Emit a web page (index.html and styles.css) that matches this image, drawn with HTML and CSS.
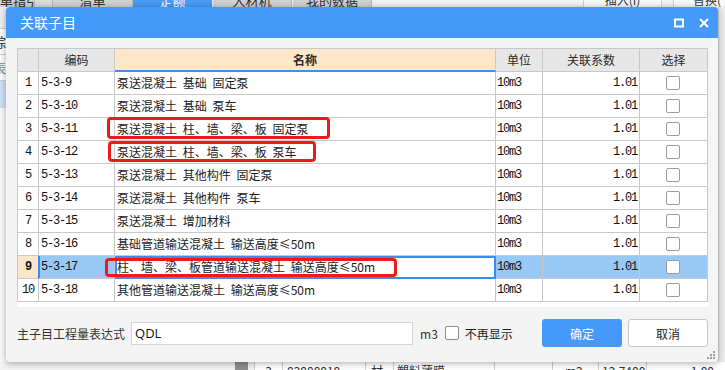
FILE: index.html
```html
<!DOCTYPE html>
<html lang="zh">
<head>
<meta charset="utf-8">
<title>关联子目</title>
<link rel="stylesheet" href="styles.css">
</head>
<body>
<div class="app">
  <div class="tabbar">
    <div class="tab t1"><span>单指引</span></div>
    <div class="tab-gap"></div>
    <div class="tab t2"><span>清单</span></div>
    <div class="tab t3 active"><span>定额</span></div>
    <div class="tab t4"><span>人材机</span></div>
    <div class="tab t5"><span>我的数据</span></div>
    <div class="tab-fill"></div>
    <div class="tool-btn b1"><span>插入(I)</span></div>
    <div class="tool-btn b2"><span>替换(</span></div>
  </div>
  <div class="app-mid">
    <div class="side-left">
      <div class="sl-top"></div>
      <div class="sl-item"><span>综</span></div>
      <div class="sl-item faint"><span>表</span></div>
      <div class="sl-sel"></div>
      <div class="sl-rest"></div>
    </div>
    <div class="mid-space"></div>
    <div class="side-right"></div>
  </div>
  <div class="app-bottom">
    <div class="bc bc-pad"></div>
    <div class="bc bc-bar"></div>
    <div class="bc bc-gap"></div>
    <div class="bc bc-no"><span>3</span></div>
    <div class="bc bc-code"><span>02000010</span></div>
    <div class="bc bc-type"><span>材</span></div>
    <div class="bc bc-name"><span>塑料薄膜</span></div>
    <div class="bc bc-spec"></div>
    <div class="bc bc-unit"><span>m2</span></div>
    <div class="bc bc-qty"><span>12.7400</span></div>
    <div class="bc bc-last"><span>1.00</span></div>
  </div>
</div>

<div class="dialog">
  <div class="titlebar">
    <span class="title">关联子目</span>
    <div class="title-actions">
      <svg class="ico" width="10" height="10" viewBox="0 0 10 10"><rect x="1" y="1.5" width="8" height="7" fill="none" stroke="#fff" stroke-width="2"/></svg>
      <svg class="ico" width="10" height="10" viewBox="0 0 10 10"><path d="M1 1L9 9M9 1L1 9" stroke="#fff" stroke-width="2" fill="none"/></svg>
    </div>
  </div>
  <div class="dlg-body">
    <div class="grid-wrap">
      <div class="grid">
        <div class="c h"></div>
        <div class="c h">编码</div>
        <div class="c h hname">名称</div>
        <div class="c h">单位</div>
        <div class="c h">关联系数</div>
        <div class="c h">选择</div>

        <div class="c num">1</div><div class="c code">5-3-9</div><div class="c name">泵送混凝土 基础 固定泵</div><div class="c unit">10m3</div><div class="c coef">1.01</div><div class="c sel"><span class="cb"></span></div>
        <div class="c num">2</div><div class="c code">5-3-10</div><div class="c name">泵送混凝土 基础 泵车</div><div class="c unit">10m3</div><div class="c coef">1.01</div><div class="c sel"><span class="cb"></span></div>
        <div class="c num">3</div><div class="c code">5-3-11</div><div class="c name">泵送混凝土 柱、墙、梁、板 固定泵</div><div class="c unit">10m3</div><div class="c coef">1.01</div><div class="c sel"><span class="cb"></span></div>
        <div class="c num">4</div><div class="c code">5-3-12</div><div class="c name">泵送混凝土 柱、墙、梁、板 泵车</div><div class="c unit">10m3</div><div class="c coef">1.01</div><div class="c sel"><span class="cb"></span></div>
        <div class="c num">5</div><div class="c code">5-3-13</div><div class="c name">泵送混凝土 其他构件 固定泵</div><div class="c unit">10m3</div><div class="c coef">1.01</div><div class="c sel"><span class="cb"></span></div>
        <div class="c num">6</div><div class="c code">5-3-14</div><div class="c name">泵送混凝土 其他构件 泵车</div><div class="c unit">10m3</div><div class="c coef">1.01</div><div class="c sel"><span class="cb"></span></div>
        <div class="c num">7</div><div class="c code">5-3-15</div><div class="c name">泵送混凝土 增加材料</div><div class="c unit">10m3</div><div class="c coef">1.01</div><div class="c sel"><span class="cb"></span></div>
        <div class="c num">8</div><div class="c code">5-3-16</div><div class="c name">基础管道输送混凝土 输送高度≤50m</div><div class="c unit">10m3</div><div class="c coef">1.01</div><div class="c sel"><span class="cb"></span></div>
        <div class="c num cur">9</div><div class="c code cur">5-3-17</div><div class="c name cur">柱、墙、梁、板管道输送混凝土 输送高度≤50m</div><div class="c unit cur">10m3</div><div class="c coef cur">1.01</div><div class="c sel cur"><span class="cb"></span></div>
        <div class="c num">10</div><div class="c code">5-3-18</div><div class="c name">其他管道输送混凝土 输送高度≤50m</div><div class="c unit">10m3</div><div class="c coef">1.01</div><div class="c sel"><span class="cb"></span></div>
      </div>
      <div class="mark m3row"></div>
      <div class="mark m4row"></div>
      <div class="mark m9row"></div>
    </div>
    <div class="footer">
      <span class="label">主子目工程量表达式</span>
      <div class="expr">QDL</div>
      <span class="m3">m3</span>
      <span class="chk"></span>
      <span class="dont">不再显示</span>
      <div class="btn ok">确定</div>
      <div class="btn cancel">取消</div>
    </div>
  </div>
  <svg class="grip" width="8" height="8" viewBox="0 0 8 8"><g fill="#a0a0a0"><rect x="6" y="0" width="2" height="2"/><rect x="3" y="3" width="2" height="2"/><rect x="6" y="3" width="2" height="2"/><rect x="0" y="6" width="2" height="2"/><rect x="3" y="6" width="2" height="2"/><rect x="6" y="6" width="2" height="2"/></g></svg>
</div>
</body>
</html>
```

FILE: styles.css
```css
* { box-sizing: border-box; }

body {
  margin: 0;
  width: 725px;
  height: 370px;
  overflow: hidden;
  position: relative;
  background: #f2f2f2;
  font-family: "Noto Sans CJK SC", "Noto Sans", sans-serif;
  color: #1e1e1e;
}

/* ---------- background application ---------- */
.app {
  display: flex;
  flex-direction: column;
  height: 370px;
}

.tabbar {
  height: 7px;
  display: flex;
  overflow: hidden;
  background: #f4f4f4;
}

.tab {
  height: 7px;
  background: #d2d2d2;
  color: #2e2e2e;
  font-size: 13px;
  text-align: center;
  overflow: hidden;
}
.tab span {
  display: block;
  line-height: 13px;
  margin-top: -6px;
  white-space: nowrap;
}
.t1 { width: 35px; border-right: 1px solid #b8b8b8; text-align: left; }
.tab-gap { width: 18px; background: #dcdcdc; border-right: 1px solid #b8b8b8; }
.t2 { width: 80px; border-right: 1px solid #b8b8b8; }
.t3 { width: 79px; }
.t4 { width: 79px; margin-left: 1px; border-right: 1px solid #b8b8b8; }
.t5 { width: 79px; margin-left: 1px; border-right: 1px solid #b8b8b8; }
.tab.active { background: #4a9cf6; color: #fff; }
.tab-fill { flex: 1; background: #f4f4f4; }

.tool-btn {
  height: 7px;
  background: #fafafa;
  border-left: 1px solid #cfcfcf;
  border-right: 1px solid #cfcfcf;
  font-size: 12px;
  color: #333;
  text-align: center;
  overflow: hidden;
}
.tool-btn span {
  display: block;
  line-height: 12px;
  margin-top: -6px;
  white-space: nowrap;
}
.b1 { width: 79px; }
.b2 { width: 52px; margin-left: 11px; text-align: left; padding-left: 19px; border-right: none; }

.app-mid {
  height: 355px;
  display: flex;
}
.side-left {
  width: 6px;
  display: flex;
  flex-direction: column;
  background: #fff;
  overflow: hidden;
}
.sl-top { height: 22px; background: #f0f0f0; border-bottom: 1px solid #d0d0d0; }
.sl-item {
  height: 26px;
  border-bottom: 1px solid #d0d0d0;
  font-size: 13px;
  line-height: 25px;
  overflow: hidden;
  color: #222;
}
.sl-item span { display: block; margin-left: -7px; white-space: nowrap; }
.sl-item.faint { color: #888; }
.sl-sel { height: 27px; background: #cfe3f7; }
.sl-rest { flex: 1; background: #fafafa; }
.mid-space { flex: 1; }
.side-right { width: 7px; background: #ededed; border-left: 1px solid #dadada; }

.app-bottom {
  height: 8px;
  display: flex;
  background: #fff;
  overflow: hidden;
  font-size: 12px;
  color: #333;
}
.bc { height: 8px; border-right: 1px solid #cfcfcf; overflow: hidden; white-space: nowrap; }
.bc span { display: block; line-height: 16px; padding-top: 1px; }
.bc-pad { width: 235px; background: #f2f2f2; border-right: none; }
.bc-bar { width: 13px; background: #8e8e8e; border-right: none; }
.bc-gap { width: 7px; background: #f2f2f2; }
.bc-no { width: 28px; text-align: center; }
.bc-code { width: 83px; padding-left: 4px; }
.bc-type { width: 28px; padding-left: 5px; }
.bc-name { width: 101px; padding-left: 3px; }
.bc-spec { width: 58px; }
.bc-unit { width: 46px; padding-left: 12px; }
.bc-qty { width: 48px; padding-left: 3px; }
.bc-last { flex: 1; text-align: right; padding-right: 11px; border-right: none; }

/* ---------- dialog ---------- */
.dialog {
  position: absolute;
  left: 6px;
  top: 7px;
  width: 712px;
  height: 355px;
  background: #f4f4f4;
  border-radius: 4px;
  box-shadow: 0 1px 7px rgba(0, 0, 0, 0.35);
  display: flex;
  flex-direction: column;
}

.titlebar {
  height: 31px;
  flex: none;
  background: #4499f9;
  border-radius: 4px 4px 0 0;
  display: flex;
  align-items: center;
  padding: 0 9px 0 14px;
  color: #fff;
  font-size: 14px;
}
.title { line-height: 31px; }
.title-actions {
  margin-left: auto;
  display: flex;
  align-items: center;
  gap: 15px;
}
.ico { display: block; }

.dlg-body {
  padding: 10px 10px 0 11px;
}

.grid-wrap {
  position: relative;
  width: 691px;
  height: 259px;
  background: #fff;
}

.grid {
  display: grid;
  grid-template-columns: 21px 76px 381px 47px 97px 68px;
  grid-auto-rows: 23px;
  border-left: 1px solid #c8c8c8;
  border-top: 1px solid #c8c8c8;
}

.c {
  border-right: 1px solid #c8c8c8;
  border-bottom: 1px solid #c8c8c8;
  font-size: 12px;
  line-height: 22px;
  white-space: nowrap;
  overflow: hidden;
  color: #1c1c1c;
}
.h {
  background: #e7e7e7;
  text-align: center;
  color: #2a2a2a;
}
.h.hname {
  background: #fde7cb;
  font-weight: bold;
  border-bottom: 2px solid #3f93f0;
  line-height: 21px;
}

.num, .code, .unit, .coef {
  font-family: "Liberation Mono", monospace;
  font-size: 12px;
  letter-spacing: -1.2px;
  color: #111;
}
.num { text-align: center; }
.code { padding-left: 2px; }
.name {
  padding-left: 2px;
  word-spacing: 3px;
}
.unit { padding-left: 1px; }
.coef {
  text-align: right;
  padding-right: 2px;
}
.sel {
  display: flex;
  align-items: center;
  justify-content: center;
  padding-right: 1px;
}
.cb {
  width: 14px;
  height: 14px;
  border: 1px solid #9c9c9c;
  border-radius: 2px;
  background: #fff;
}

/* current row */
.num.cur {
  background: #fde6c9;
  font-weight: bold;
  border-right-color: #3b8cf0;
}
.code.cur { background: #98c9f5; box-shadow: inset 1px 0 0 #3b8cf0; }
.name.cur { background: #fff; outline: 2px solid #3b8cf0; outline-offset: -2px; }
.unit.cur, .coef.cur, .sel.cur { background: #98c9f5; }

/* red annotation marks */
.mark {
  position: absolute;
  border: 3px solid #f0181c;
  border-radius: 4px;
}
.m3row { left: 90px; top: 69px; width: 223px; height: 22px; }
.m4row { left: 91px; top: 93px; width: 208px; height: 21px; }
.m9row { left: 88px; top: 210px; width: 292px; height: 19px; }

/* footer */
.footer {
  display: flex;
  align-items: center;
  margin-top: 12px;
  height: 28px;
}
.label {
  font-size: 12px;
  color: #333;
  margin-right: 6px;
}
.expr {
  width: 282px;
  height: 23px;
  border: 1px solid #d4d4d4;
  background: #fff;
  font-family: "Open Sans", "Noto Sans", sans-serif;
  font-size: 13px;
  line-height: 21px;
  padding-left: 3px;
  color: #111;
}
.m3 {
  margin-left: 7px;
  font-size: 12px;
  color: #333;
}
.chk {
  margin-left: 7px;
  width: 14px;
  height: 14px;
  border: 1px solid #8c8c8c;
  border-radius: 2px;
  background: #fff;
}
.dont {
  margin-left: 6px;
  font-size: 12px;
  color: #1e1e1e;
}
.btn {
  width: 80px;
  height: 28px;
  border-radius: 3px;
  font-size: 12px;
  display: flex;
  align-items: center;
  justify-content: center;
}
.ok {
  margin-left: auto;
  background: #4499f9;
  color: #fff;
}
.cancel {
  margin-left: 6px;
  background: #fff;
  border: 1px solid #c8c8c8;
  color: #222;
}

.grip {
  position: absolute;
  right: 3px;
  bottom: 3px;
}
```
